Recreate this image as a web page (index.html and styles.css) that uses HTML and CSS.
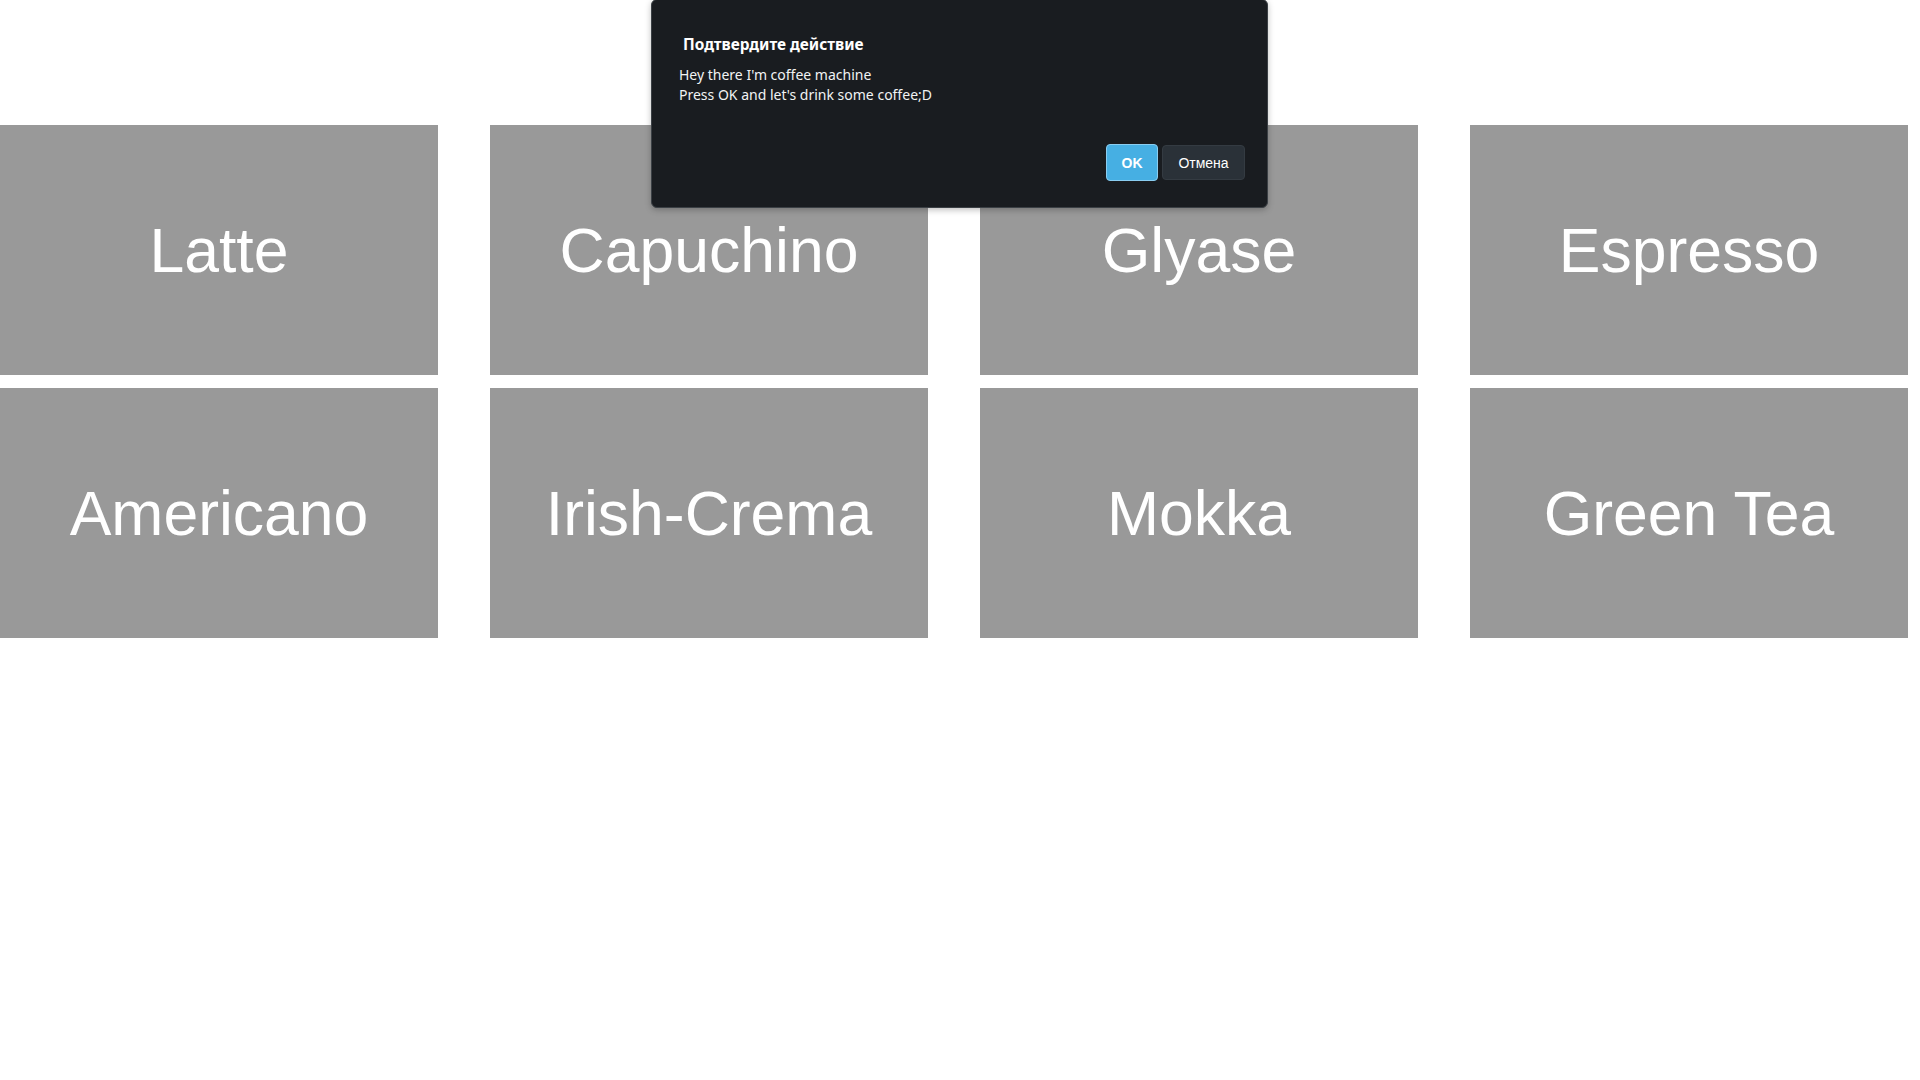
FILE: index.html
```html
<!DOCTYPE html>
<html lang="en">
<head>
  <meta charset="UTF-8">
  <title>Coffee machine</title>
  <link rel="stylesheet" href="styles.css">
</head>
<body>
  <div class="menu">
    <div class="item">Latte</div>
    <div class="item">Capuchino</div>
    <div class="item">Glyase</div>
    <div class="item">Espresso</div>
    <div class="item">Americano</div>
    <div class="item">Irish-Crema</div>
    <div class="item">Mokka</div>
    <div class="item">Green Tea</div>
  </div>

  <div class="dialog">
    <div class="dialog-title">Подтвердите действие</div>
    <div class="dialog-text">Hey there I'm coffee machine<br>Press OK and let's drink some coffee;D</div>
    <div class="dialog-buttons">
      <button class="btn btn-ok">OK</button>
      <button class="btn btn-cancel">Отмена</button>
    </div>
  </div>
</body>
</html>
```

FILE: styles.css
```css
body {
  margin: 0;
  background-color: #fff;
  font-family: 'Liberation Sans', Arial, sans-serif;
}
.menu {
  display: grid;
  grid-template-columns: repeat(4, 438px);
  column-gap: 52px;
  row-gap: 13px;
  padding-top: 125px;
}
.item {
  height: 250px;
  background-color: #999999;
  color: white;
  font-size: 62.5px;
  display: flex;
  align-items: center;
  justify-content: center;
}

.dialog {
  position: absolute;
  top: -1px;
  left: 651px;
  width: 617px;
  height: 209px;
  box-sizing: border-box;
  background-color: #191c20;
  border: 1px solid #3b4045;
  border-radius: 6px;
  box-shadow: 0 2px 6px rgba(0, 0, 0, 0.25);
  padding: 36px 22px 26px 27px;
  display: flex;
  flex-direction: column;
  font-family: 'Noto Sans', 'Open Sans', sans-serif;
  color: #f1f3f4;
}
.dialog-title {
  font-size: 15.4px;
  font-weight: bold;
  color: #fff;
  margin-left: 4px;
  line-height: 18px;
}
.dialog-text {
  font-size: 14px;
  line-height: 20px;
  margin-top: 11px;
}
.dialog-buttons {
  margin-top: auto;
  display: flex;
  justify-content: flex-end;
  align-items: center;
  gap: 4px;
}
.btn {
  font-family: 'Liberation Sans', Arial, sans-serif;
  font-size: 14px;
  color: #fff;
  border-radius: 4px;
  cursor: pointer;
}
.btn-ok {
  width: 52px;
  height: 37px;
  background-color: #46afe3;
  border: 1px solid #8acdf0;
  font-weight: bold;
}
.btn-cancel {
  width: 83px;
  height: 35px;
  background-color: #2a3138;
  border: 1px solid #343b42;
}
```
